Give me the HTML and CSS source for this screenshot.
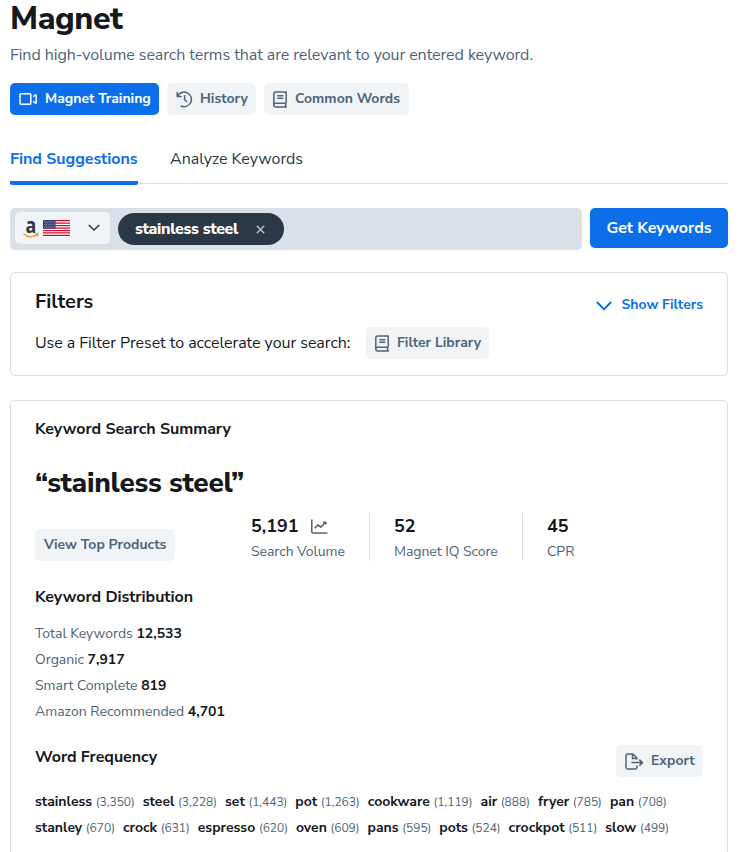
FILE: index.html
```html
<!DOCTYPE html>
<html lang="en">
<head>
  <meta charset="UTF-8">
  <meta name="viewport" content="width=device-width, initial-scale=1.0">
  <title>Magnet</title>
  <link rel="stylesheet" href="styles.css">
</head>
<body>
  <svg width="0" height="0" class="sprite">
    <symbol id="icon-book" viewBox="0 0 15 17">
      <path d="M13.2 12.3V1H2.8Q.8 1 .8 3v11q0 2 2 2h11M13.2 12.3H2.8q-2 0-2 1.9M12.6 12.3V16M4.3 4.7h6M4.3 7.3h6"/>
    </symbol>
  </svg>

  <h1>Magnet</h1>
  <p class="subtitle">Find high-volume search terms that are relevant to your entered keyword.</p>

  <div class="actions">
    <button class="btn btn-primary btn-training">
      <svg class="icon" width="19" height="14" viewBox="0 0 19 14"><path d="M2 1.7h8.8q1 0 1 1v8.6q0 1-1 1H2q-1 0-1-1V2.7q0-1 1-1zM14.2 4.6l2.4-1.7q.6-.2.6.5v7.2q0 .7-.6.5l-2.4-1.7"/></svg>
      <span>Magnet Training</span>
    </button>
    <button class="btn btn-history">
      <svg class="icon" width="17" height="17" viewBox="0 0 17 17"><path d="M1.2 1v4.6h4.6M1.5 5.3A7.3 7.3 0 1 1 4.6 14.8M8.6 4.2v4.6l2.5 2.2"/></svg>
      <span>History</span>
    </button>
    <button class="btn btn-common">
      <svg class="icon" width="15" height="17"><use href="#icon-book"/></svg>
      <span>Common Words</span>
    </button>
  </div>

  <div class="tabs">
    <div class="tab active"><span>Find Suggestions</span></div>
    <div class="tab"><span>Analyze Keywords</span></div>
  </div>

  <div class="search">
    <div class="search-box">
      <div class="market">
        <div class="amazon">
          <span>a</span>
          <svg width="16" height="5" viewBox="0 0 16 5"><path d="M.4.8c4 3.8 10.2 4 14 .8M12.2.8h2.9l-.5 2.5"/></svg>
        </div>
        <svg class="flag" width="27" height="16" viewBox="0 0 27 16">
          <path fill="#fff" d="M0 0h27v16H0z"/>
          <path stroke="#c8102e" stroke-width="1.25" d="M0 .6h27M0 3.1h27M0 5.6h27M0 8h27M0 10.5h27M0 12.9h27M0 15.4h27"/>
          <path fill="#343b6b" d="M0 0h12.5v8.6H0z"/>
          <path stroke="#aeb3c9" stroke-width=".8" stroke-dasharray="1 1.2" d="M1 1.3h11M2 2.9h10M1 4.5h11M2 6.1h10M1 7.6h11"/>
        </svg>
        <svg class="chevron" width="12" height="8" viewBox="0 0 12 8"><path d="M.8 1l5.2 5 5.2-5"/></svg>
      </div>
      <div class="pill">
        <span>stainless steel</span>
        <svg width="9" height="9" viewBox="0 0 9 9"><path d="M.8.8l7.4 7.4M8.2.8L.8 8.2"/></svg>
      </div>
    </div>
    <button class="btn-get">Get Keywords</button>
  </div>

  <div class="card filters">
    <div class="filters-head">
      <h2>Filters</h2>
      <a class="show-filters">
        <svg width="16" height="10" viewBox="0 0 16 10"><path d="M.9 1L8 8.4 15.1 1"/></svg>
        <span>Show Filters</span>
      </a>
    </div>
    <div class="preset">
      <p>Use a Filter Preset to accelerate your search:</p>
      <button class="btn btn-library">
        <svg class="icon" width="15" height="17"><use href="#icon-book"/></svg>
        <span>Filter Library</span>
      </button>
    </div>
  </div>

  <div class="card summary">
    <h3>Keyword Search Summary</h3>
    <div class="keyword">“stainless steel”</div>

    <div class="overview">
      <button class="btn btn-products"><span>View Top Products</span></button>
      <div class="stats">
        <div class="stat">
          <div class="value">5,191
            <svg class="icon" width="17" height="15" viewBox="0 0 17 15"><path d="M.8.5v12.2q0 1.3 1.3 1.3h14.2M3.8 9.3l3-3.4 3 2.3 4.6-4.8M12 3.2h2.8v2.2"/></svg>
          </div>
          <div class="label label-volume">Search Volume</div>
        </div>
        <div class="stat">
          <div class="value">52</div>
          <div class="label label-score">Magnet IQ Score</div>
        </div>
        <div class="stat">
          <div class="value">45</div>
          <div class="label">CPR</div>
        </div>
      </div>
    </div>

    <h3 class="title-distribution">Keyword Distribution</h3>
    <ul class="distribution">
      <li>Total Keywords <b>12,533</b></li>
      <li>Organic <b>7,917</b></li>
      <li>Smart Complete <b>819</b></li>
      <li>Amazon Recommended <b>4,701</b></li>
    </ul>

    <div class="frequency-head">
      <h3>Word Frequency</h3>
      <button class="btn btn-export">
        <svg class="icon" width="19" height="17" viewBox="0 0 19 17"><path d="M12 12.5v1.8A1.7 1.7 0 0 1 10.3 16H2.7A1.7 1.7 0 0 1 1 14.3V2.7A1.7 1.7 0 0 1 2.7 1h5.2L12 5.1v1.5M7.5 1v4.5H12M6.3 9.6h11M14.4 6.6l3 3-3 3"/></svg>
        <span>Export</span>
      </button>
    </div>
    <div class="words">
      <div><b>stainless</b> <span>(3,350)</span></div>
      <div><b>steel</b> <span>(3,228)</span></div>
      <div><b>set</b> <span>(1,443)</span></div>
      <div><b>pot</b> <span>(1,263)</span></div>
      <div><b>cookware</b> <span>(1,119)</span></div>
      <div><b>air</b> <span>(888)</span></div>
      <div><b>fryer</b> <span>(785)</span></div>
      <div><b>pan</b> <span>(708)</span></div>
    </div>
    <div class="words">
      <div><b>stanley</b> <span>(670)</span></div>
      <div><b>crock</b> <span>(631)</span></div>
      <div><b>espresso</b> <span>(620)</span></div>
      <div><b>oven</b> <span>(609)</span></div>
      <div><b>pans</b> <span>(595)</span></div>
      <div><b>pots</b> <span>(524)</span></div>
      <div><b>crockpot</b> <span>(511)</span></div>
      <div><b>slow</b> <span>(499)</span></div>
    </div>
  </div>
</body>
</html>
```
FILE: styles.css
```css
* {
  box-sizing: border-box;
}

body {
  margin: 0;
  padding: 0 10px;
  background: #fff;
  color: #15191e;
  font-family: "Nunito Sans", Lato, sans-serif;
  font-size: 16px;
  white-space: nowrap;
}

h1, h2, h3, p, ul {
  margin: 0;
  padding: 0;
}

button {
  font-family: inherit;
  border: none;
  cursor: pointer;
}

svg {
  display: block;
  flex: none;
}

.sprite {
  position: absolute;
}

.icon, #icon-book {
  fill: none;
  stroke: currentColor;
  stroke-width: 1.5;
  stroke-linejoin: round;
}

h1 {
  height: 38px;
  line-height: 38px;
  font-size: 32px;
  font-weight: 800;
  letter-spacing: -0.4px;
}

.subtitle {
  height: 24px;
  margin-top: 5px;
  line-height: 24px;
  color: #4d6478;
  letter-spacing: -0.06px;
}

.actions {
  display: flex;
  gap: 8px;
  margin-top: 16px;
}

.btn {
  display: flex;
  align-items: center;
  gap: 7px;
  height: 32px;
  padding: 0 9px;
  border-radius: 5px;
  background: #f0f4f7;
  color: #4d6478;
  font-size: 14px;
  font-weight: 700;
}

.btn span {
  margin-top: -2px;
}

.btn-primary {
  background: #0c6fe9;
  color: #fff;
}

.btn-training {
  width: 149px;
}

.btn-history {
  width: 89px;
}

.btn-common {
  width: 145px;
}

.tabs {
  display: flex;
  gap: 32px;
  height: 50px;
  margin-top: 19px;
  border-bottom: 1px solid #d9e0e8;
}

.tab {
  height: 51px;
  line-height: 50px;
  color: #2c3845;
  letter-spacing: -0.03px;
}

.tab.active {
  width: 128px;
  border-bottom: 4px solid #0c6fe9;
  border-radius: 2px;
  color: #0c6fe9;
  font-weight: 700;
}

.search {
  display: flex;
  gap: 8px;
  margin-top: 24px;
}

.search-box {
  display: flex;
  gap: 8px;
  flex: 1;
  height: 42px;
  padding: 4px 5px;
  border-radius: 5px;
  background: #d9e0e8;
}

.market {
  display: flex;
  align-items: center;
  width: 95px;
  height: 32px;
  padding: 0 10px 0 8px;
  border-radius: 5px;
  background: #f0f4f7;
}

.amazon {
  width: 16px;
  text-align: center;
  font: 700 21px/18px "Open Sans", sans-serif;
  color: #2c3845;
}

.amazon span {
  display: block;
  height: 15px;
  line-height: 14px;
  transform: scaleX(0.85);
}

.amazon svg {
  fill: none;
  stroke: #f7981d;
  stroke-width: 1.3;
}

.flag {
  margin-left: 4px;
}

.chevron {
  margin-left: auto;
  fill: none;
  stroke: #2c3845;
  stroke-width: 1.5;
}

.pill {
  display: flex;
  align-items: center;
  justify-content: space-between;
  width: 166px;
  height: 32px;
  margin-top: 1px;
  padding: 0 19px 0 17px;
  border-radius: 16px;
  background: #2c3845;
  color: #fff;
  font-weight: 800;
  letter-spacing: -0.35px;
}

.pill svg {
  stroke: #b5c3cf;
  stroke-width: 1.5;
}

.btn-get {
  width: 138px;
  height: 40px;
  padding: 0;
  border-radius: 5px;
  background: #0c6fe9;
  color: #fff;
  font-size: 16px;
  font-weight: 700;
}

.card {
  border: 1px solid #d9e0e8;
  border-radius: 5px;
  padding: 0 24px;
}

.filters {
  height: 104px;
  margin-top: 22px;
}

.filters-head {
  display: flex;
  justify-content: space-between;
  height: 54px;
  padding-top: 15px;
}

h2 {
  line-height: 28px;
  font-size: 20px;
}

.show-filters {
  display: flex;
  align-items: center;
  gap: 9px;
  height: 32px;
  color: #0c6fe9;
  font-size: 14px;
  font-weight: 700;
}

.show-filters svg {
  margin-top: 3px;
  fill: none;
  stroke: currentColor;
  stroke-width: 2;
}

.preset {
  display: flex;
  align-items: center;
  gap: 16px;
}

.preset p {
  width: 315px;
  letter-spacing: -0.04px;
}

.btn-library {
  width: 123px;
}

.summary {
  height: 452px;
  margin-top: 24px;
  border-bottom: none;
  border-radius: 5px 5px 0 0;
}

h3 {
  line-height: 24px;
  font-size: 16px;
  font-weight: 700;
  letter-spacing: -0.05px;
}

.summary > h3:first-child {
  margin-top: 16px;
}

.keyword {
  margin-top: 22px;
  line-height: 40px;
  font-size: 28px;
  font-weight: 800;
  letter-spacing: -0.27px;
}

.overview {
  display: flex;
  align-items: flex-end;
  margin-top: 10px;
}

.btn-products {
  width: 140px;
}

.stats {
  display: flex;
  height: 48px;
  margin-left: 76px;
}

.stat {
  padding-right: 24px;
}

.stat + .stat {
  padding-left: 24px;
  border-left: 1px solid #d9e0e8;
}

.value {
  display: flex;
  align-items: center;
  gap: 12px;
  height: 26px;
  font-size: 18px;
  font-weight: 700;
}

.value .icon {
  color: #4d6478;
}

.label {
  line-height: 26px;
  color: #4d6478;
  font-size: 14px;
  letter-spacing: -0.05px;
}

.label-volume {
  width: 94px;
}

.label-score {
  width: 104px;
}

.title-distribution {
  margin-top: 24px;
}

.distribution {
  margin-top: 12px;
  list-style: none;
  line-height: 26px;
  color: #4d6478;
  font-size: 14px;
}

b {
  color: #15191e;
  font-weight: 700;
}

.frequency-head {
  display: flex;
  justify-content: space-between;
  height: 44px;
  margin-top: 20px;
}

.btn-export {
  width: 87px;
}

.words {
  display: flex;
  gap: 8px;
  line-height: 26px;
  font-size: 14px;
}

.words span {
  color: #4d6478;
  font-size: 12px;
  letter-spacing: -0.03px;
}
```
